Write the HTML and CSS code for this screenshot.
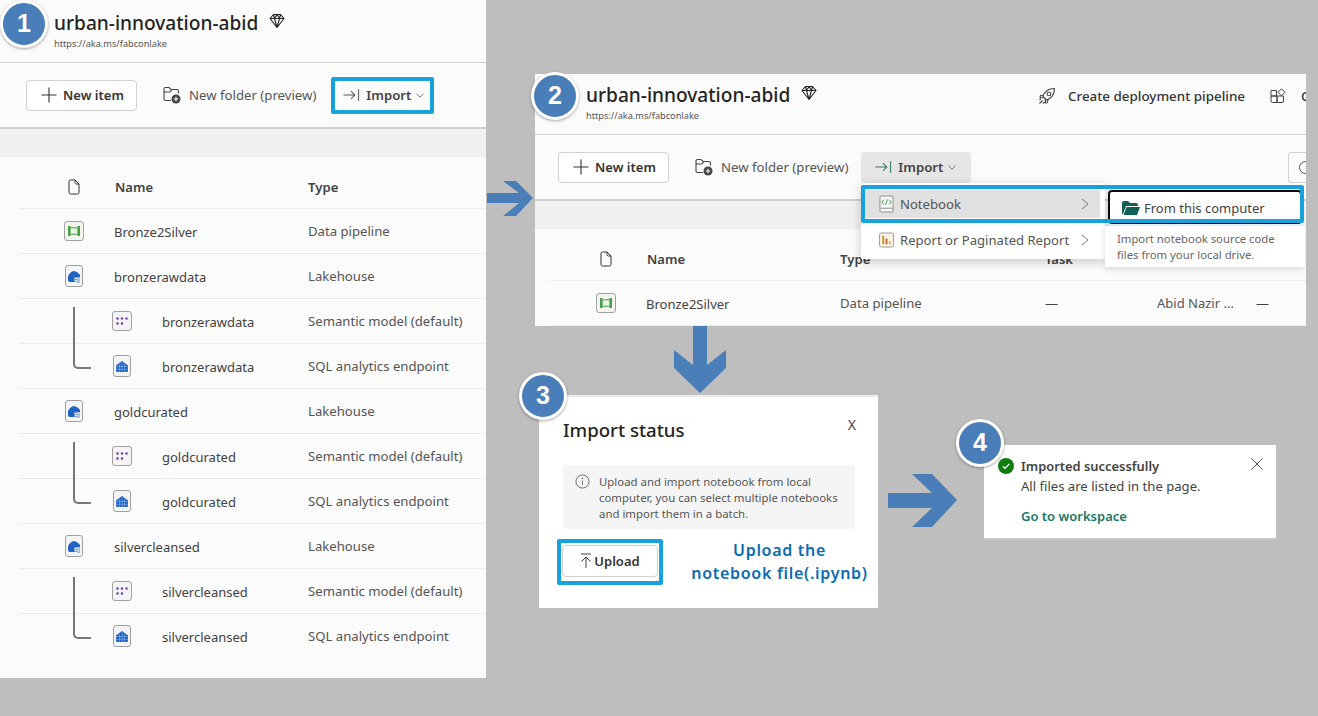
FILE: index.html
```html
<!DOCTYPE html>
<html lang="en">
<head>
<meta charset="utf-8">
<title>Import notebook steps</title>
<link rel="stylesheet" href="styles.css">
</head>
<body>
<svg class="defs" width="0" height="0" aria-hidden="true">
  <symbol id="diamond" viewBox="0 0 16 16"><path d="M4.500 1.500h7l3.500 4-7 9-7-9zM1 5.500h14M5.500 5.500L8 14.500l2.500-9M4.500 1.500l1 4 2.500-4 2.500 4 1-4" fill="none" stroke="#222" stroke-width="1.100" stroke-linejoin="round"/></symbol>
  <symbol id="plus" viewBox="0 0 16 16"><path d="M8 .5v15M.5 8h15" stroke="#333" stroke-width="1.100" fill="none"/></symbol>
  <symbol id="folder" viewBox="0 0 18 18"><path d="M8 14.500H2.500a1.500 1.500 0 0 1-1.500-1.500V3a1.500 1.500 0 0 1 1.500-1.500H6l2 2h6a1.500 1.500 0 0 1 1.500 1.500v2.500M1 6h6l1.800-2.400" fill="none" stroke="#444" stroke-width="1.100"/><circle cx="13" cy="13" r="4.500" fill="#444"/><path d="M13 10.800v4.400M10.800 13h4.400" stroke="#fff" stroke-width="1.100"/></symbol>
  <symbol id="import" viewBox="0 0 18 14"><path d="M.5 7h12M8.500 3l4 4-4 4M16.500 1v12" fill="none" stroke="currentColor" stroke-width="1.100"/></symbol>
  <symbol id="chev" viewBox="0 0 8 5"><path d="M.5.800L4 4.200 7.500.800" fill="none" stroke="#777" stroke-width="1"/></symbol>
  <symbol id="file" viewBox="0 0 12 16"><path d="M1 2.500A1.500 1.500 0 0 1 2.500 1H7l4 4v8.500A1.500 1.500 0 0 1 9.500 15h-7A1.500 1.500 0 0 1 1 13.500zM7 1v2.500A1.500 1.500 0 0 0 8.500 5H11" fill="none" stroke="#333" stroke-width="1"/></symbol>
  <symbol id="pipeline" viewBox="0 0 20 20"><rect x=".5" y=".5" width="19" height="19" rx="2.500" fill="#f3f4f0" stroke="#a0a0a0"/><path d="M6 7h8v6H6z" fill="#eaf4e6"/><path d="M4 5h2.600v10H4zM13.400 5H16v10h-2.600z" fill="#45a049"/><path d="M6.500 6.800h7M6.500 13.200h7" stroke="#45a049" stroke-width="1"/></symbol>
  <symbol id="lake" viewBox="0 0 18 22"><rect x=".5" y=".5" width="17" height="21" rx="2.500" fill="#f3f4f6" stroke="#a0a0a0"/><path d="M3 12.500C3 9.500 6 6.500 9 6c2 .3 4.500 2 6 4v2H9.500v5H5a2 2 0 0 1-2-2z" fill="#1f63c4"/><path d="M9.500 12.800q1.300-1 2.700 0t2.800 0M9.500 14.800q1.300-1 2.700 0t2.800 0M9.500 16.800q1.300-1 2.700 0t2.800 0" fill="none" stroke="#4f83cc" stroke-width=".9"/></symbol>
  <symbol id="model" viewBox="0 0 20 20"><rect x=".5" y=".5" width="19" height="19" rx="2.500" fill="#f4f3f6" stroke="#a0a0a0"/><g fill="#6b3fa5"><circle cx="5.500" cy="7.500" r="1.200"/><circle cx="10" cy="7.500" r="1.200"/><circle cx="14.500" cy="7.500" r="1.200"/><circle cx="5.500" cy="12.500" r="1.200"/><circle cx="10" cy="12.500" r="1.200"/></g></symbol>
  <symbol id="sql" viewBox="0 0 18 22"><rect x=".5" y=".5" width="17" height="21" rx="2.500" fill="#f3f4f6" stroke="#a0a0a0"/><path d="M3 10.500L9 6l6 4.500V15.500a1.500 1.500 0 0 1-1.500 1.500h-9A1.500 1.500 0 0 1 3 15.500z" fill="#1f63c4"/><path d="M6.500 9v8M9 7v10M11.500 9v8M3 11.500h12M3 14.300h12" stroke="#7da6e4" stroke-width=".7"/></symbol>
  <symbol id="notebook" viewBox="0 0 16 18"><path d="M1 1.500A1 1 0 0 1 2 .5h12a1 1 0 0 1 1 1v15a1 1 0 0 1-1 1H2a1 1 0 0 1-1-1zM1 13.500h14" fill="#f4f5f2" stroke="#8c8c8c"/><path d="M5 4.500L3 7l2 2.500M11 4.500L13 7l-2 2.500" fill="none" stroke="#3f9a44"/><path d="M9 4L7 10" stroke="#3f9a44"/></symbol>
  <symbol id="report" viewBox="0 0 16 16"><rect x=".5" y=".5" width="15" height="15" rx="2" fill="#f7f3e8" stroke="#999"/><path d="M3.500 3.500h2v9h-2z" fill="#d98e1f"/><path d="M7 6.500h2v6H7z" fill="#b86a2a"/><path d="M10.500 9.500h2v3h-2z" fill="#e4ad4d"/></symbol>
  <symbol id="chevr" viewBox="0 0 8 12"><path d="M1 1l6 5-6 5" fill="none" stroke="#777" stroke-width="1"/></symbol>
  <symbol id="rocket" viewBox="0 0 18 18"><path d="M5 9.500C6 5 10.500 1.500 16.500 1.500c0 6-3.500 10.500-8 11.500zM5.500 8L2.500 8.500 2 10.500l3.500.2M10 12.500l-.5 3-2 .5-.2-3.500M4.500 13.500l-3 3M3 11.500L1.500 13M6.500 15L5 16.500" fill="none" stroke="#444" stroke-width="1.100" stroke-linejoin="round"/><circle cx="11" cy="7" r="1.800" fill="none" stroke="#444" stroke-width="1.100"/></symbol>
  <symbol id="apps" viewBox="0 0 16 16"><path d="M1 2.500h5.500V8H1zM1 8h6v6.500H2.500A1.500 1.500 0 0 1 1 13zM7 8h6.500v5a1.500 1.500 0 0 1-1.500 1.500H7zM11.500.8l3.500 3.500-3.500 3.500L8 4.300z" fill="none" stroke="#444" stroke-width="1"/></symbol>
  <symbol id="open" viewBox="0 0 18 14"><path d="M0 2a2 2 0 0 1 2-2h4l2 2h6a2 2 0 0 1 2 2v1H4L1 13H0zM4.500 6H18l-3 8H1.500z" fill="#0e5f56"/></symbol>
  <symbol id="info" viewBox="0 0 16 16"><circle cx="8" cy="8" r="7" fill="none" stroke="#666"/><path d="M8 7v4.500" stroke="#666"/><circle cx="8" cy="4.800" r=".8" fill="#666"/></symbol>
  <symbol id="upload" viewBox="0 0 12 16"><path d="M1 1h10M6 15V4.500M1.500 8.500L6 4l4.500 4.500" fill="none" stroke="#444"/></symbol>
  <symbol id="check" viewBox="0 0 16 16"><circle cx="8" cy="8" r="8" fill="#107c10"/><path d="M4.800 8.300l2.200 2 4.200-4.300" fill="none" stroke="#fff" stroke-width="1.200"/></symbol>
  <symbol id="close" viewBox="0 0 12 12"><path d="M.5.500l11 11M11.500.500l-11 11" stroke="#555" stroke-width="1"/></symbol>
</svg>

<main class="canvas">
  <section class="panel panel-one">
    <header class="head">
      <div class="ws"><div class="ws-line"><h1 class="ws-title">urban-innovation-abid</h1><svg class="i-diamond"><use href="#diamond"/></svg></div><p class="ws-url">https://aka.ms/fabconlake</p></div>
    </header>
    <div class="toolbar">
      <button class="new-item"><svg class="i-plus"><use href="#plus"/></svg>New item</button>
      <span class="new-folder"><svg class="i-folder"><use href="#folder"/></svg>New folder (preview)</span>
      <span class="import import-boxed"><svg class="i-import"><use href="#import"/></svg><b>Import</b><svg class="i-chev"><use href="#chev"/></svg></span>
    </div>
    <div class="band"></div>
    <div class="row row-head"><span class="c-icon"><svg class="i-file"><use href="#file"/></svg></span><span class="c-name">Name</span><span class="c-type">Type</span></div>
    <div class="row"><span class="c-icon"><svg class="i-sq"><use href="#pipeline"/></svg></span><span class="c-name">Bronze2Silver</span><span class="c-type">Data pipeline</span></div>
    <div class="row"><span class="c-icon"><svg class="i-tall"><use href="#lake"/></svg></span><span class="c-name">bronzerawdata</span><span class="c-type">Lakehouse</span></div>
    <div class="row child tree"><span class="c-icon"><svg class="i-sq"><use href="#model"/></svg></span><span class="c-name">bronzerawdata</span><span class="c-type">Semantic model (default)</span></div>
    <div class="row child"><span class="c-icon"><svg class="i-tall"><use href="#sql"/></svg></span><span class="c-name">bronzerawdata</span><span class="c-type">SQL analytics endpoint</span></div>
    <div class="row"><span class="c-icon"><svg class="i-tall"><use href="#lake"/></svg></span><span class="c-name">goldcurated</span><span class="c-type">Lakehouse</span></div>
    <div class="row child tree"><span class="c-icon"><svg class="i-sq"><use href="#model"/></svg></span><span class="c-name">goldcurated</span><span class="c-type">Semantic model (default)</span></div>
    <div class="row child"><span class="c-icon"><svg class="i-tall"><use href="#sql"/></svg></span><span class="c-name">goldcurated</span><span class="c-type">SQL analytics endpoint</span></div>
    <div class="row"><span class="c-icon"><svg class="i-tall"><use href="#lake"/></svg></span><span class="c-name">silvercleansed</span><span class="c-type">Lakehouse</span></div>
    <div class="row child tree"><span class="c-icon"><svg class="i-sq"><use href="#model"/></svg></span><span class="c-name">silvercleansed</span><span class="c-type">Semantic model (default)</span></div>
    <div class="row child row-last"><span class="c-icon"><svg class="i-tall"><use href="#sql"/></svg></span><span class="c-name">silvercleansed</span><span class="c-type">SQL analytics endpoint</span></div>
  </section>

  <section class="panel panel-two">
    <header class="head">
      <div class="ws"><div class="ws-line"><h1 class="ws-title">urban-innovation-abid</h1><svg class="i-diamond"><use href="#diamond"/></svg></div><p class="ws-url">https://aka.ms/fabconlake</p></div>
      <div class="actions"><svg class="i-rocket"><use href="#rocket"/></svg><span class="act-text">Create deployment pipeline</span><svg class="i-apps"><use href="#apps"/></svg><span class="act-text">C</span></div>
    </header>
    <div class="toolbar">
      <button class="new-item"><svg class="i-plus"><use href="#plus"/></svg>New item</button>
      <span class="new-folder"><svg class="i-folder"><use href="#folder"/></svg>New folder (preview)</span>
      <span class="import import-active"><svg class="i-import"><use href="#import"/></svg><b>Import</b><svg class="i-chev"><use href="#chev"/></svg></span>
      <span class="search"><i class="search-ring"></i></span>
    </div>
    <div class="band"></div>
    <div class="row row-head"><span class="c-icon"><svg class="i-file"><use href="#file"/></svg></span><span class="c-name">Name</span><span class="c-type narrow">Type</span><span class="c-task">Task</span></div>
    <div class="row"><span class="c-icon"><svg class="i-sq"><use href="#pipeline"/></svg></span><span class="c-name">Bronze2Silver</span><span class="c-type narrow">Data pipeline</span><span class="c-task">—</span><span class="c-owner">Abid Nazir ...</span><span class="c-dash">—</span></div>
    <div class="menu">
      <div class="menu-item is-hover"><svg class="i-note"><use href="#notebook"/></svg><span>Notebook</span><svg class="i-chevr"><use href="#chevr"/></svg></div>
      <div class="menu-item"><svg class="i-report"><use href="#report"/></svg><span>Report or Paginated Report</span><svg class="i-chevr"><use href="#chevr"/></svg></div>
    </div>
    <div class="submenu"><svg class="i-open"><use href="#open"/></svg>From this computer</div>
    <p class="tip">Import notebook source code<br>files from your local drive.</p>
    <div class="highlight"></div>
  </section>

  <section class="panel panel-three">
    <div class="dialog-head"><h2 class="dialog-title">Import status</h2><span class="dialog-x">X</span></div>
    <div class="notice"><svg class="i-info"><use href="#info"/></svg><p>Upload and import notebook from local computer, you can select multiple notebooks and import them in a batch.</p></div>
    <div class="dialog-foot">
      <div class="upload-box"><button class="upload"><svg class="i-upload"><use href="#upload"/></svg>Upload</button></div>
      <p class="note-blue">Upload the<br>notebook file(.ipynb)</p>
    </div>
  </section>

  <section class="panel panel-four">
    <div class="toast-title"><svg class="i-check"><use href="#check"/></svg><strong>Imported successfully</strong><svg class="i-close"><use href="#close"/></svg></div>
    <p class="toast-text">All files are listed in the page.</p>
    <a class="toast-link">Go to workspace</a>
  </section>

  <svg class="arrow arrow-a" viewBox="0 0 46 36"><path d="M0 12h32L16 0h13l17 17-17 18H16l16-13H0z" fill="#4a7eb8"/></svg>
  <svg class="arrow arrow-b" viewBox="0 0 52 67"><path d="M19 0h14v39l19-15v18L26 67 0 42V24l19 15z" fill="#4a7eb8"/></svg>
  <svg class="arrow arrow-c" viewBox="0 0 69 53"><path d="M0 19h44L24 0h20l25 26-25 27H24l20-19H0z" fill="#4a7eb8"/></svg>

  <span class="badge badge-1">1</span>
  <span class="badge badge-2">2</span>
  <span class="badge badge-3">3</span>
  <span class="badge badge-4">4</span>
</main>
</body>
</html>
```
FILE: styles.css
```css
* { box-sizing: border-box; }
html, body { margin: 0; padding: 0; }
body { background: #bebebe; font-family: "Noto Sans", "Open Sans", sans-serif; color: #424242; }
.defs { position: absolute; }
.canvas { position: relative; width: 1318px; height: 716px; overflow: hidden; }
svg { display: block; flex: none; }
h1, h2, p { margin: 0; font-weight: 400; }
button { font: inherit; color: inherit; background: #fff; }

/* free-canvas pieces of the collage */
.panel { position: absolute; overflow: hidden; }
.panel-one { --s: 0px; left: 0; top: 0; width: 486px; height: 678px; background: #fbfbfb; }
.panel-two { --s: 3px; left: 535px; top: 74px; width: 771px; height: 252px; background: #fbfbfb; }
.panel-three { left: 539px; top: 395px; width: 339px; height: 213px; background: #fff; border-top: 2px solid #ececec; }
.panel-four { left: 984px; top: 445px; width: 292px; height: 95px; background: #fff; border-bottom: 2px solid #c9c9c9; padding: 11px 0 0 15px; }
.arrow { position: absolute; }
.arrow-a { left: 487px; top: 181px; width: 46px; height: 36px; }
.arrow-b { left: 674px; top: 326px; width: 52px; height: 67px; }
.arrow-c { left: 888px; top: 474px; width: 69px; height: 53px; }
.badge { position: absolute; width: 48px; height: 48px; border-radius: 50%; background: #4a7eb8; border: 3px solid #fff; box-shadow: 0 1px 3px rgba(0,0,0,.35); color: #fff; font: 700 25px/41px "Liberation Sans", sans-serif; text-align: center; }
.badge-1 { left: 0; top: 0; }
.badge-2 { left: 531px; top: 72px; }
.badge-3 { left: 519px; top: 372px; }
.badge-4 { left: 956px; top: 419px; }

/* workspace header */
.head { height: 63px; display: flex; border-bottom: 1px solid #cfcfcf; padding-left: calc(54px - var(--s)); }
.panel-two .head { height: 61px; }
.ws { padding-top: 8px; }
.panel-two .ws { padding-top: 6px; }
.ws-line { display: flex; align-items: center; gap: 11px; height: 29px; }
.ws-title { font-size: 19.1px; font-weight: 500; color: #242424; white-space: nowrap; }
.i-diamond { width: 16px; height: 16px; margin-top: -3px; }
.ws-url { font-size: 9.2px; line-height: 12px; margin-top: 1px; color: #555; }
.actions { margin-left: auto; width: 268px; display: flex; align-items: center; height: 43px; overflow: hidden; white-space: nowrap; font-size: 13.4px; font-weight: 500; color: #333; }
.i-rocket { width: 18px; height: 18px; margin-right: 12px; }
.i-apps { width: 16px; height: 16px; margin: 0 15px 0 25px; }

/* toolbar */
.toolbar { height: 66px; display: flex; align-items: center; border-bottom: 2px solid #cfcfcf; padding-left: calc(26px - var(--s)); font-size: 13.2px; white-space: nowrap; }
.new-item { width: 111px; height: 31px; border: 1px solid #d1d1d1; border-radius: 4px; display: flex; align-items: center; padding: 0 0 0 14px; gap: 6px; font-weight: 600; font-size: 13px; color: #333; }
.i-plus { width: 16px; height: 16px; }
.new-folder { display: flex; align-items: center; margin-left: 26px; color: #555; }
.i-folder { width: 18px; height: 18px; margin-right: 8px; }
.import { display: flex; align-items: center; color: #424242; }
.import b { font-weight: 600; }
.import-boxed { margin-left: 15px; width: 103px; height: 37px; border: 4px solid #17a2dc; border-radius: 2px; padding-left: 8px; }
.i-import { width: 17px; height: 14px; margin-right: 6px; color: #555; }
.i-chev { width: 8px; height: 5px; margin-left: 5px; }
.import-active { margin-left: 13px; width: 110px; height: 31px; background: #e6e6e6; border-radius: 4px; padding-left: 14px; }
.import-active .i-import { color: #2c7a67; }
.search { margin-left: auto; width: 18px; height: 31px; border: 1px solid #d1d1d1; border-right: 0; border-radius: 4px 0 0 4px; padding: 8px 0 0 10px; overflow: hidden; }
.search-ring { display: block; width: 13px; height: 13px; border: 1px solid #555; border-radius: 50%; }
.band { height: 28px; background: #f0f0f0; }

/* list */
.row { position: relative; height: 45px; display: flex; align-items: center; margin-left: calc(18px - var(--s)); border-bottom: 1px solid #ececec; font-size: 13px; white-space: nowrap; }
.row > * { flex: none; }
.row-head { height: 52px; padding-top: 9px; font-weight: 600; color: #424242; }
.row-last { border-bottom-color: transparent; }
.c-icon { width: 96px; display: flex; padding-left: 47px; }
.c-name { width: 194px; margin-top: 2px; }
.row-head .c-name { padding-left: 1px; margin-top: 0; }
.c-type { width: 178px; font-size: 13.15px; color: #555; }
.c-type.narrow { width: 205px; }
.row-head .c-type, .row-head .c-task { color: #424242; }
.c-task { width: 112px; }
.c-owner { width: 99px; color: #555; }
.i-file { width: 12px; height: 16px; margin-left: 3px; }
.i-sq { width: 20px; height: 20px; margin-left: -1px; }
.i-tall { width: 18px; height: 22px; }
.child .c-icon { width: 144px; padding-left: 95px; }
.child .c-name { width: 146px; }
.tree::before { content: ""; position: absolute; left: 55px; top: 8px; width: 16px; height: 60px; border-left: 2px solid #777; border-bottom: 2px solid #777; border-bottom-left-radius: 5px; z-index: 1; }

/* import menu overlay */
.menu { position: absolute; left: 326px; top: 109px; width: 244px; height: 76px; background: #fff; box-shadow: 0 3px 10px rgba(0,0,0,.2); padding-top: 7px; font-size: 13.1px; color: #555; }
.menu-item { display: flex; align-items: center; height: 28px; margin: 0 5px 8px 3px; padding-left: 15px; border-radius: 2px; }
.is-hover { background: #e0e0e0; }
.i-note { width: 15px; height: 18px; margin-right: 6px; }
.i-report { width: 15px; height: 16px; margin-right: 6px; }
.i-chevr { width: 8px; height: 12px; margin-left: auto; margin-right: 11px; }
.submenu { position: absolute; left: 573px; top: 116px; width: 194px; height: 34px; background: #fff; border: 2px solid #0a0a0a; border-radius: 4px; display: flex; align-items: center; padding: 1px 0 0 12px; gap: 4px; font-size: 13px; color: #424242; }
.i-open { width: 18px; height: 14px; }
.tip { position: absolute; left: 570px; top: 152px; width: 200px; height: 41px; background: #fff; box-shadow: 0 2px 6px rgba(0,0,0,.15); padding: 5px 0 0 12px; font-size: 11.3px; line-height: 16px; color: #666; white-space: nowrap; }
.highlight { position: absolute; left: 326px; top: 111px; width: 443px; height: 38px; border: 4px solid #17a2dc; border-radius: 2px; }

/* import dialog */
.dialog-head { display: flex; padding: 20px 21px 0 24px; justify-content: space-between; height: 68px; }
.dialog-title { font-size: 18.6px; font-weight: 500; color: #242424; line-height: 26px; }
.dialog-x { font-size: 14px; line-height: 16px; margin-right: 1px; color: #444; }
.notice { margin-left: 24px; width: 292px; height: 64px; background: #f5f5f5; border-radius: 3px; display: flex; padding: 9px 0 0 12px; gap: 9px; font-size: 11.4px; line-height: 16px; color: #555; }
.i-info { width: 15px; height: 15px; }
.notice p { width: 246px; }
.dialog-foot { display: flex; padding: 10px 0 0 18px; }
.upload-box { width: 106px; height: 46px; border: 4px solid #17a2dc; border-radius: 2px; padding: 2px; }
.upload { width: 96px; height: 32px; margin: 0 0 0 -1px; border: 1px solid #d1d1d1; border-radius: 4px; display: flex; align-items: center; justify-content: center; gap: 2px; font-size: 13px; font-weight: 600; color: #333; }
.i-upload { width: 12px; height: 16px; }
.note-blue { width: 205px; text-align: center; padding-left: 28px; font-size: 16px; letter-spacing: .7px; line-height: 23px; font-weight: 600; color: #0c6bb0; white-space: nowrap; }

/* toast */
.toast-title { display: flex; align-items: center; height: 20px; font-size: 12.9px; color: #424242; }
.toast-title strong { font-weight: 600; }
.i-check { width: 16px; height: 16px; margin: 0 7px 0 -1px; }
.i-close { width: 12px; height: 12px; margin-left: auto; margin-right: 13px; margin-top: -4px; }
.toast-text { font-size: 13.1px; line-height: 20px; margin: 0 0 0 22px; color: #424242; }
.toast-link { display: block; font-size: 13px; line-height: 20px; font-weight: 600; margin: 10px 0 0 22px; color: #15786a; }
```
